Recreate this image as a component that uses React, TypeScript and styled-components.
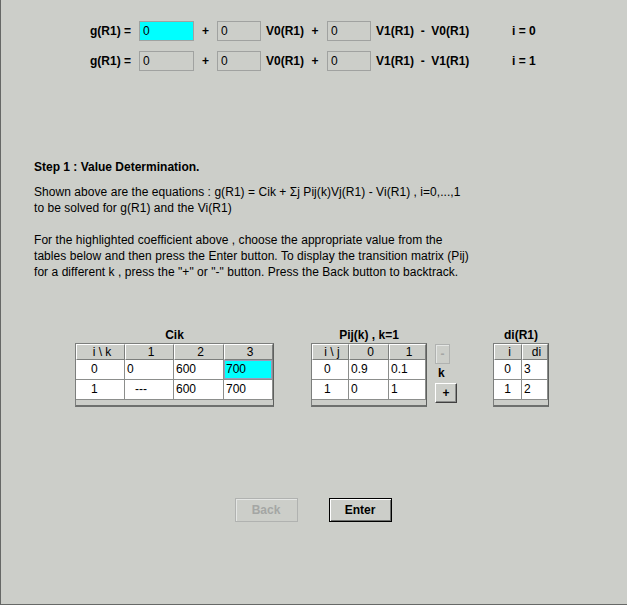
import React from "react";
import styled, { createGlobalStyle } from "styled-components";

const Global = createGlobalStyle`
  html, body { margin: 0; padding: 0; background: #cccec9; }
  body { font-family: "Liberation Sans", Arial, sans-serif; }
`;

const Frame = styled.div`
  width: 627px;
  height: 605px;
  box-sizing: border-box;
  background: #cccec9;
  border-left: 1px solid #666866;
  border-bottom: 1px solid #666866;
  font-family: "Liberation Sans", Arial, sans-serif;
  font-size: 12px;
  color: #000;
  display: flex;
  flex-direction: column;
`;

const Equations = styled.div`
  padding: 21px 0 0 89px;
  display: flex;
  flex-direction: column;
  gap: 10px;
`;

const EqRow = styled.div`
  display: grid;
  grid-template-columns: 49px 55px 23px 44px 42px 24px 44px 141px auto;
  align-items: center;
  height: 20px;
  font-weight: bold;
  white-space: pre;
`;

const Term = styled.span<{ $pad?: number }>`
  padding-left: ${(p) => p.$pad ?? 0}px;
`;

const Op = styled.span`
  text-align: center;
`;

const Field = styled.input<{ $hl?: boolean }>`
  box-sizing: border-box;
  height: 20px;
  width: 100%;
  margin: 0;
  border: 1px solid #a0a2a0;
  background: ${(p) => (p.$hl ? "#00ffff" : "transparent")};
  font-family: "Liberation Sans", Arial, sans-serif;
  font-size: 12px;
  padding: 0 0 0 3px;
  color: #000;
  outline: none;
`;

const Step = styled.div`
  margin-top: 88px;
  padding-left: 33px;
  line-height: 16px;
`;

const StepTitle = styled.div`
  font-weight: bold;
  margin-bottom: 9px;
`;

const Para = styled.div`
  white-space: pre;
  letter-spacing: 0.05px;
`;

const Tables = styled.div`
  margin-top: 48px;
  padding-left: 74px;
  display: flex;
  align-items: flex-start;
`;

const Group = styled.div<{ $ml?: number }>`
  display: flex;
  flex-direction: column;
  align-items: center;
  margin-left: ${(p) => p.$ml ?? 0}px;
`;

const Caption = styled.div`
  font-weight: bold;
  line-height: 15px;
`;

const ScrollFrame = styled.div`
  border: 1px solid #7c7e7c;
  border-right-color: #5e605e;
  border-bottom: 2px solid #6e706e;
  background: #cccec9;
  padding-bottom: 5px;
`;

const Grid = styled.div<{ $cols: string }>`
  display: grid;
  grid-template-columns: ${(p) => p.$cols};
`;

const Head = styled.div`
  box-sizing: border-box;
  height: 16px;
  line-height: 14px;
  background: #cccec9;
  border-top: 1px solid #ffffff;
  border-left: 1px solid #ffffff;
  border-right: 1px solid #7c7e7c;
  border-bottom: 1px solid #7c7e7c;
  text-align: center;
  padding-left: 3px;
`;

const Cell = styled.div<{ $sel?: boolean; $pad?: number; $center?: boolean }>`
  box-sizing: border-box;
  height: 20px;
  line-height: 18px;
  background: ${(p) => (p.$sel ? "#00ffff" : "#ffffff")};
  border-right: 1px solid #8c8e8c;
  border-bottom: 1px solid #8c8e8c;
  box-shadow: ${(p) => (p.$sel ? "inset 0 0 0 1px #9c9abc" : "none")};
  padding-left: ${(p) => p.$pad ?? 2}px;
  text-align: ${(p) => (p.$center ? "center" : "left")};
`;

const KColumn = styled.div`
  margin-left: 8px;
  padding-top: 16px;
  display: flex;
  flex-direction: column;
  align-items: flex-start;
`;

const SmallBtn = styled.button<{ $w: number; $disabled?: boolean }>`
  box-sizing: border-box;
  width: ${(p) => p.$w}px;
  height: 20px;
  margin: 0;
  padding: 0;
  background: #cccec9;
  font-family: "Liberation Sans", Arial, sans-serif;
  font-size: 12px;
  font-weight: bold;
  color: ${(p) => (p.$disabled ? "#a4a6a4" : "#000")};
  border: 1px solid ${(p) => (p.$disabled ? "#b0b2b0" : "#404040")};
  border-top-color: ${(p) => (p.$disabled ? "#b0b2b0" : "#ffffff")};
  border-left-color: ${(p) => (p.$disabled ? "#b0b2b0" : "#ffffff")};
  box-shadow: ${(p) => (p.$disabled ? "inset 1px 1px 0 #e4e6e4" : "inset -1px -1px 0 #8c8e8c")};
`;

const KLabel = styled.div`
  font-weight: bold;
  line-height: 19px;
  padding-left: 3px;
`;

const Actions = styled.div`
  margin-top: 91px;
  display: flex;
  justify-content: center;
  gap: 31px;
  padding-right: 2px;
`;

const ActionBtn = styled.button<{ $default?: boolean; $disabled?: boolean }>`
  box-sizing: border-box;
  width: 63px;
  height: 24px;
  margin: 0;
  padding: 0;
  background: #cccec9;
  font-family: "Liberation Sans", Arial, sans-serif;
  font-size: 12px;
  font-weight: bold;
  color: ${(p) => (p.$disabled ? "#a4a6a4" : "#000")};
  border: 1px solid ${(p) => (p.$default ? "#000" : "#b0b2b0")};
  box-shadow: ${(p) =>
    p.$default
      ? "inset 1px 1px 0 #ffffff, inset -1px -1px 0 #6e706e"
      : "inset 1px 1px 0 #e4e6e4"};
`;

type Row = { v: string; sel?: boolean; pad?: number; center?: boolean }[];

function DataTable({
  caption,
  cols,
  headers,
  rows,
  ml,
}: {
  caption: string;
  cols: string;
  headers: string[];
  rows: Row[];
  ml?: number;
}) {
  return (
    <Group $ml={ml}>
      <Caption>{caption}</Caption>
      <ScrollFrame>
        <Grid $cols={cols}>
          {headers.map((h, i) => (
            <Head key={"h" + i}>{h}</Head>
          ))}
          {rows.map((r, ri) =>
            r.map((c, ci) => (
              <Cell key={ri + "-" + ci} $sel={c.sel} $pad={c.pad} $center={c.center}>
                {c.v}
              </Cell>
            ))
          )}
        </Grid>
      </ScrollFrame>
    </Group>
  );
}

export default function App() {
  return (
    <>
      <Global />
      <Frame>
        <Equations>
          <EqRow>
            <Term>g(R1) =</Term>
            <Field $hl readOnly value="0" />
            <Op>+</Op>
            <Field readOnly value="0" />
            <Term $pad={5}>V0(R1)</Term>
            <Op>+</Op>
            <Field readOnly value="0" />
            <Term $pad={5}>{"V1(R1)  -  V0(R1)"}</Term>
            <Term>i = 0</Term>
          </EqRow>
          <EqRow>
            <Term>g(R1) =</Term>
            <Field readOnly value="0" />
            <Op>+</Op>
            <Field readOnly value="0" />
            <Term $pad={5}>V0(R1)</Term>
            <Op>+</Op>
            <Field readOnly value="0" />
            <Term $pad={5}>{"V1(R1)  -  V1(R1)"}</Term>
            <Term>i = 1</Term>
          </EqRow>
        </Equations>

        <Step>
          <StepTitle>Step 1 :  Value Determination.</StepTitle>
          <Para>
            {"Shown above are the equations : g(R1) = Cik + Σj Pij(k)Vj(R1) - Vi(R1) , i=0,...,1\nto be solved for g(R1) and the Vi(R1)\n\nFor the highlighted coefficient above , choose the appropriate value from the\ntables below and then press the Enter button. To display the transition matrix (Pij)\nfor a different k , press the \"+\" or \"-\" button. Press the Back button to backtrack."}
          </Para>
        </Step>

        <Tables>
          <DataTable
            caption="Cik"
            cols="49px 49px 50px 49px"
            headers={["i \\ k", "1", "2", "3"]}
            rows={[
              [{ v: "0", pad: 15 }, { v: "0" }, { v: "600" }, { v: "700", sel: true }],
              [{ v: "1", pad: 15 }, { v: "---", pad: 10 }, { v: "600" }, { v: "700" }],
            ]}
          />
          <DataTable
            caption="Pij(k) , k=1"
            ml={37}
            cols="37px 40px 37px"
            headers={["i \\ j", "0", "1"]}
            rows={[
              [{ v: "0", pad: 12 }, { v: "0.9" }, { v: "0.1" }],
              [{ v: "1", pad: 12 }, { v: "0" }, { v: "1" }],
            ]}
          />
          <KColumn>
            <SmallBtn $w={15} $disabled>-</SmallBtn>
            <KLabel>k</KLabel>
            <SmallBtn $w={22}>+</SmallBtn>
          </KColumn>
          <DataTable
            caption="di(R1)"
            ml={36}
            cols="28px 26px"
            headers={["i", "di"]}
            rows={[
              [{ v: "0", center: true, pad: 0 }, { v: "3" }],
              [{ v: "1", center: true, pad: 0 }, { v: "2" }],
            ]}
          />
        </Tables>

        <Actions>
          <ActionBtn $disabled>Back</ActionBtn>
          <ActionBtn $default>Enter</ActionBtn>
        </Actions>
      </Frame>
    </>
  );
}
